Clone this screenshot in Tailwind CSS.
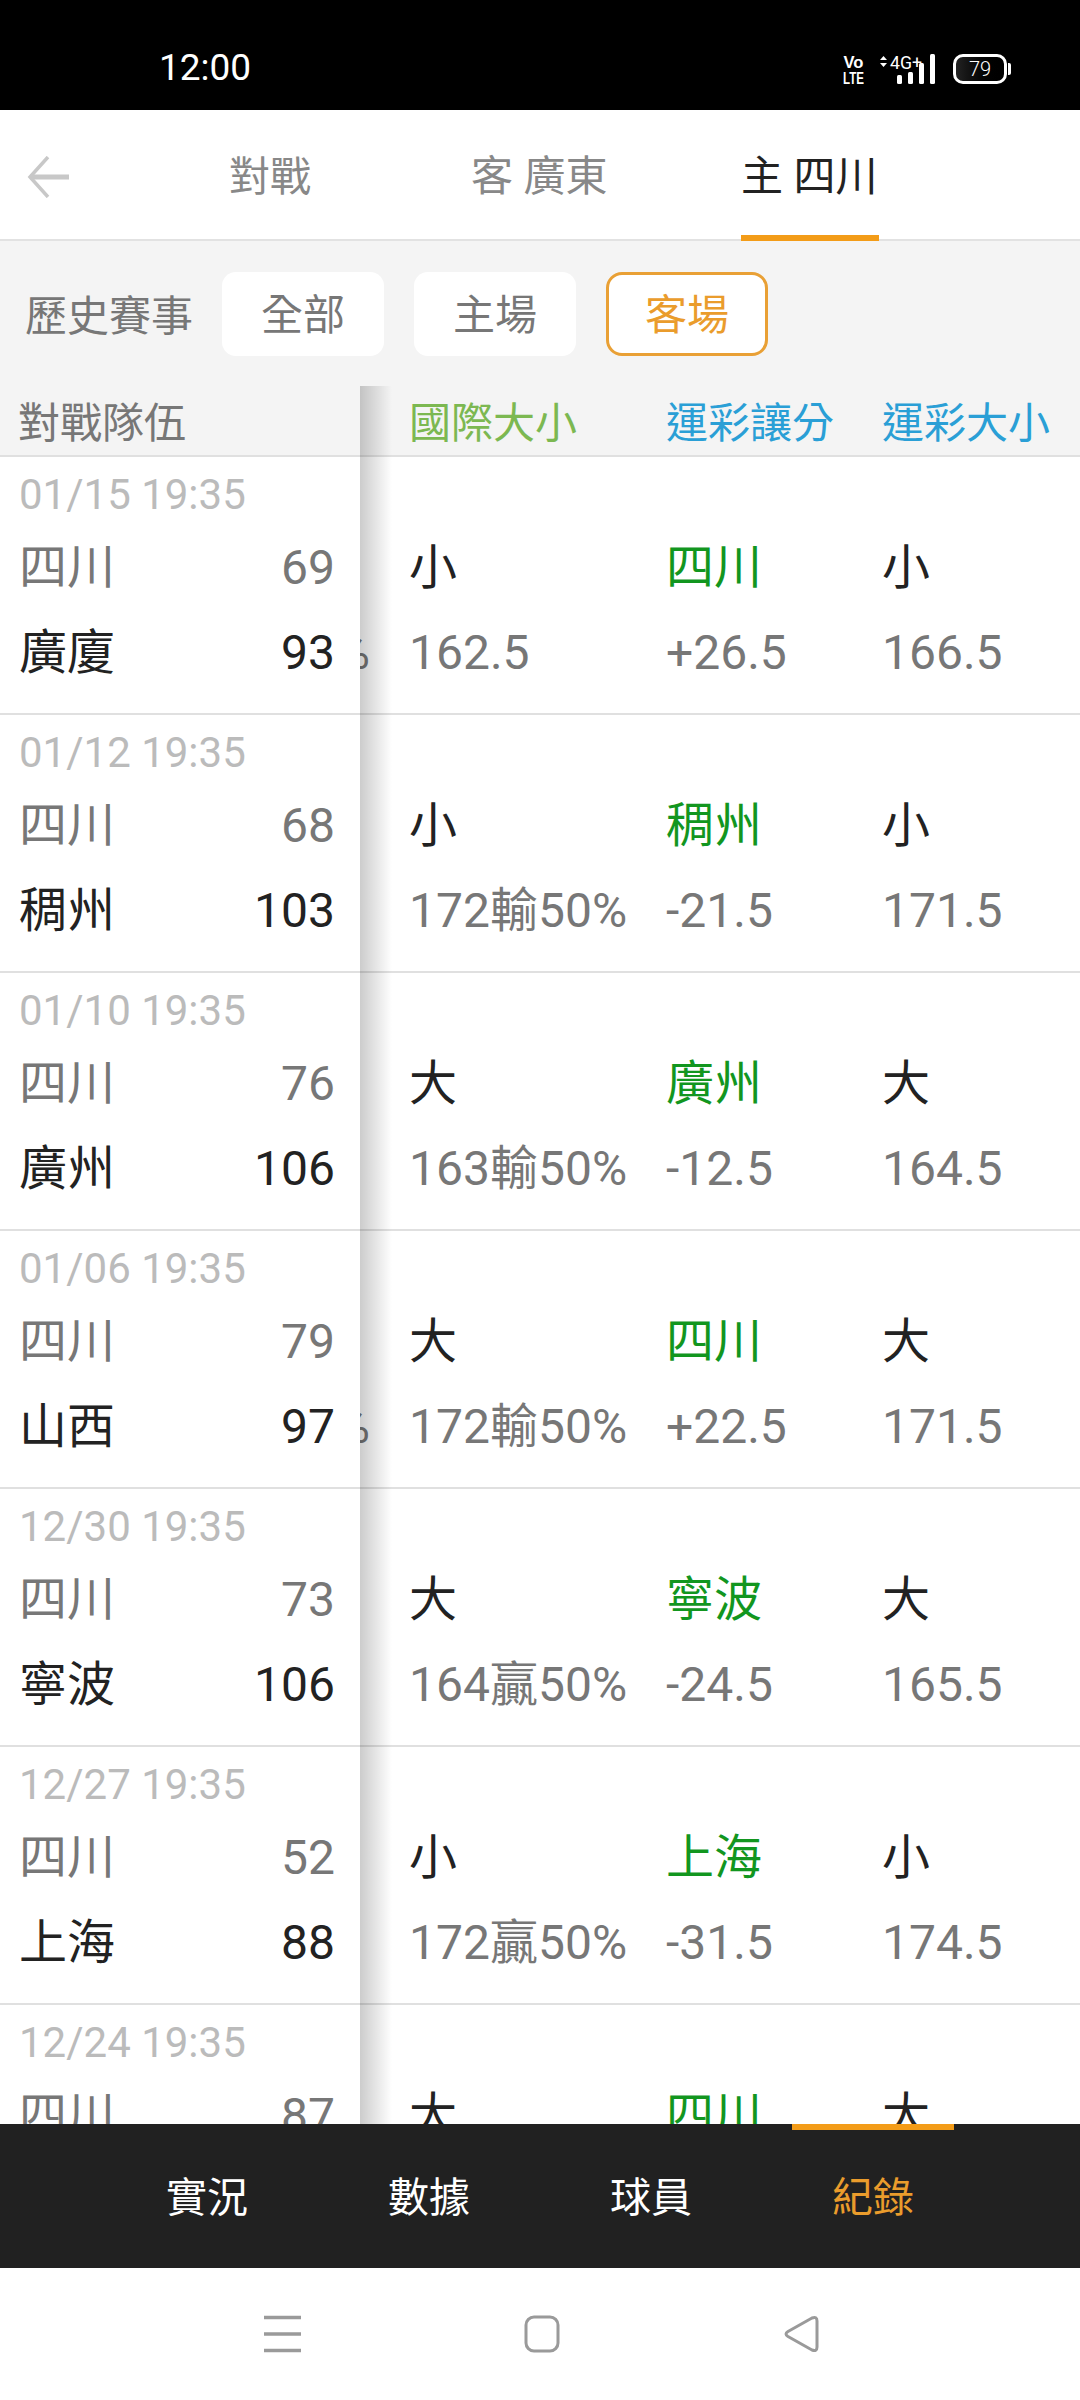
<!DOCTYPE html>
<html lang="zh-Hant">
<head>
<meta charset="utf-8">
<script src="https://cdn.jsdelivr.net/npm/@tailwindcss/browser@4"></script>
</head>
<body class="m-0 bg-white">
<div class="relative flex flex-col w-[1080px] h-[2400px] overflow-hidden bg-white text-[#777] font-['Roboto','Noto_Sans_CJK_TC',sans-serif]">

  <!-- status bar -->
  <div class="h-[110px] shrink-0 bg-black text-white flex items-center pt-[28px] pl-[159px] pr-[69px] justify-between">
    <span class="text-[37px] leading-none -mt-[3px]">12:00</span>
    <div class="flex items-center">
      <svg width="21" height="30" viewBox="0 0 21 30" class="mr-[15px]">
        <text x="10.5" y="13.5" text-anchor="middle" font-size="17" font-weight="700" fill="#fff" font-family="Liberation Sans" textLength="20" lengthAdjust="spacingAndGlyphs">Vo</text>
        <text x="10.5" y="29.5" text-anchor="middle" font-size="17" font-weight="700" fill="#fff" font-family="Liberation Sans" textLength="21" lengthAdjust="spacingAndGlyphs">LTE</text>
      </svg>
      <svg width="56" height="30" viewBox="0 0 56 30" class="mr-[18px]">
        <path d="M1 6l3.5-4 3.5 4zM1 9l3.5 4 3.5-4z" fill="#fff"/>
        <text x="11" y="15" font-size="19" fill="#fff" font-family="Roboto" textLength="32" lengthAdjust="spacingAndGlyphs">4G+</text>
        <rect x="18" y="21" width="5" height="9" rx="1.5" fill="#fff"/>
        <rect x="29" y="18" width="5" height="12" rx="1.5" fill="#fff"/>
        <rect x="40" y="9" width="5" height="21" rx="1.5" fill="#fff"/>
        <rect x="51" y="0" width="5" height="30" rx="1.5" fill="#fff"/>
      </svg>
      <div class="flex items-center">
        <div class="w-[54px] h-[30px] rounded-[10px] border-[3px] border-white bg-gradient-to-r from-[#222] to-black flex items-center justify-center text-[20px] leading-none font-light">79</div>
        <div class="w-[3px] h-[12px] bg-white ml-[1px] rounded-r-[2px]"></div>
      </div>
    </div>
  </div>

  <!-- top tabs -->
  <div class="relative h-[131px] shrink-0 bg-white border-b-2 border-[#e2e2e2]">
    <svg width="42" height="42" viewBox="0 0 42 42" class="absolute left-[27px] top-[46px]">
      <path d="M21 1 L3 21 L21 41" fill="none" stroke="#c8c8c8" stroke-width="3.5"/>
      <path d="M3 21 H42" fill="none" stroke="#c8c8c8" stroke-width="5"/>
    </svg>
    <div class="absolute left-[229px] top-[42px] text-[41px] leading-[50px] text-[#888]">對戰</div>
    <div class="absolute left-[471px] top-[42px] text-[42px] leading-[50px] text-[#888]">客 廣東</div>
    <div class="absolute left-[741px] top-[42px] text-[42px] leading-[50px] text-[#222]">主 四川</div>
    <div class="absolute left-[741px] bottom-[-2px] w-[138px] h-[6px] bg-[#f39c18]"></div>
  </div>

  <!-- filter -->
  <div class="h-[145px] shrink-0 bg-[#f4f4f4] flex items-start pt-[31px] pl-[25px]">
    <span class="text-[42px] leading-[84px] w-[197px] pt-[3px] text-[#777]">歷史賽事</span>
    <div class="flex gap-[30px]">
      <div class="w-[162px] h-[84px] pt-[3px] rounded-[14px] bg-white flex items-center justify-center text-[42px] text-[#777]">全部</div>
      <div class="w-[162px] h-[84px] pt-[3px] rounded-[14px] bg-white flex items-center justify-center text-[42px] text-[#777]">主場</div>
      <div class="w-[162px] h-[84px] pt-[3px] rounded-[16px] bg-white border-[3px] border-[#e9a035] flex items-center justify-center text-[42px] text-[#ea9c2c]">客場</div>
    </div>
  </div>

  <!-- table -->
  <div class="relative flex-1 min-h-0 overflow-hidden">
    <!-- header -->
    <div class="h-[71px] flex bg-[#f4f4f4] border-b-2 border-[#e0e0e0] text-[42px] leading-[76px]">
      <div class="w-[360px] pl-[18px] text-[#777]">對戰隊伍</div>
      <div class="w-[49px]"></div>
      <div class="w-[257px] text-[#7cb851]">國際大小</div>
      <div class="w-[216px] text-[#2a9fd6]">運彩讓分</div>
      <div class="text-[#2a9fd6]">運彩大小</div>
    </div>

    <!-- rows -->
    <div class="flex h-[258px] border-b-2 border-[#e0e0e0]">
      <div class="w-[360px] shrink-0 bg-white relative z-10 pl-[19px] pr-[25px]">
        <div class="pt-[14px] h-[68px] text-[42px] leading-[48px] text-[#bbb]">01/15 19:35</div>
        <div class="h-[85px] flex justify-between items-center text-[48px] text-[#777]"><span>四川</span><span>69</span></div>
        <div class="h-[85px] flex justify-between items-center text-[48px] text-[#222]"><span>廣廈</span><span>93</span></div>
      </div>
      <div class="w-[49px] shrink-0 overflow-hidden">
        <div class="h-[68px]"></div><div class="h-[85px]"></div>
        <div class="h-[85px] w-[10px] flex justify-end items-center text-[48px]">%</div>
      </div>
      <div class="w-[257px] shrink-0 pt-[68px] text-[48px]">
        <div class="h-[85px] flex items-center text-[#222]">小</div>
        <div class="h-[85px] flex items-center">162.5</div>
      </div>
      <div class="w-[216px] shrink-0 pt-[68px] text-[48px]">
        <div class="h-[85px] flex items-center text-[#12961f]">四川</div>
        <div class="h-[85px] flex items-center">+26.5</div>
      </div>
      <div class="pt-[68px] text-[48px]">
        <div class="h-[85px] flex items-center text-[#222]">小</div>
        <div class="h-[85px] flex items-center">166.5</div>
      </div>
    </div>

    <div class="flex h-[258px] border-b-2 border-[#e0e0e0]">
      <div class="w-[360px] shrink-0 bg-white relative z-10 pl-[19px] pr-[25px]">
        <div class="pt-[14px] h-[68px] text-[42px] leading-[48px] text-[#bbb]">01/12 19:35</div>
        <div class="h-[85px] flex justify-between items-center text-[48px] text-[#777]"><span>四川</span><span>68</span></div>
        <div class="h-[85px] flex justify-between items-center text-[48px] text-[#222]"><span>稠州</span><span>103</span></div>
      </div>
      <div class="w-[49px] shrink-0"></div>
      <div class="w-[257px] shrink-0 pt-[68px] text-[48px]">
        <div class="h-[85px] flex items-center text-[#222]">小</div>
        <div class="h-[85px] flex items-center">172輸50%</div>
      </div>
      <div class="w-[216px] shrink-0 pt-[68px] text-[48px]">
        <div class="h-[85px] flex items-center text-[#12961f]">稠州</div>
        <div class="h-[85px] flex items-center">-21.5</div>
      </div>
      <div class="pt-[68px] text-[48px]">
        <div class="h-[85px] flex items-center text-[#222]">小</div>
        <div class="h-[85px] flex items-center">171.5</div>
      </div>
    </div>

    <div class="flex h-[258px] border-b-2 border-[#e0e0e0]">
      <div class="w-[360px] shrink-0 bg-white relative z-10 pl-[19px] pr-[25px]">
        <div class="pt-[14px] h-[68px] text-[42px] leading-[48px] text-[#bbb]">01/10 19:35</div>
        <div class="h-[85px] flex justify-between items-center text-[48px] text-[#777]"><span>四川</span><span>76</span></div>
        <div class="h-[85px] flex justify-between items-center text-[48px] text-[#222]"><span>廣州</span><span>106</span></div>
      </div>
      <div class="w-[49px] shrink-0"></div>
      <div class="w-[257px] shrink-0 pt-[68px] text-[48px]">
        <div class="h-[85px] flex items-center text-[#222]">大</div>
        <div class="h-[85px] flex items-center">163輸50%</div>
      </div>
      <div class="w-[216px] shrink-0 pt-[68px] text-[48px]">
        <div class="h-[85px] flex items-center text-[#12961f]">廣州</div>
        <div class="h-[85px] flex items-center">-12.5</div>
      </div>
      <div class="pt-[68px] text-[48px]">
        <div class="h-[85px] flex items-center text-[#222]">大</div>
        <div class="h-[85px] flex items-center">164.5</div>
      </div>
    </div>

    <div class="flex h-[258px] border-b-2 border-[#e0e0e0]">
      <div class="w-[360px] shrink-0 bg-white relative z-10 pl-[19px] pr-[25px]">
        <div class="pt-[14px] h-[68px] text-[42px] leading-[48px] text-[#bbb]">01/06 19:35</div>
        <div class="h-[85px] flex justify-between items-center text-[48px] text-[#777]"><span>四川</span><span>79</span></div>
        <div class="h-[85px] flex justify-between items-center text-[48px] text-[#222]"><span>山西</span><span>97</span></div>
      </div>
      <div class="w-[49px] shrink-0 overflow-hidden">
        <div class="h-[68px]"></div><div class="h-[85px]"></div>
        <div class="h-[85px] w-[10px] flex justify-end items-center text-[48px]">%</div>
      </div>
      <div class="w-[257px] shrink-0 pt-[68px] text-[48px]">
        <div class="h-[85px] flex items-center text-[#222]">大</div>
        <div class="h-[85px] flex items-center">172輸50%</div>
      </div>
      <div class="w-[216px] shrink-0 pt-[68px] text-[48px]">
        <div class="h-[85px] flex items-center text-[#12961f]">四川</div>
        <div class="h-[85px] flex items-center">+22.5</div>
      </div>
      <div class="pt-[68px] text-[48px]">
        <div class="h-[85px] flex items-center text-[#222]">大</div>
        <div class="h-[85px] flex items-center">171.5</div>
      </div>
    </div>

    <div class="flex h-[258px] border-b-2 border-[#e0e0e0]">
      <div class="w-[360px] shrink-0 bg-white relative z-10 pl-[19px] pr-[25px]">
        <div class="pt-[14px] h-[68px] text-[42px] leading-[48px] text-[#bbb]">12/30 19:35</div>
        <div class="h-[85px] flex justify-between items-center text-[48px] text-[#777]"><span>四川</span><span>73</span></div>
        <div class="h-[85px] flex justify-between items-center text-[48px] text-[#222]"><span>寧波</span><span>106</span></div>
      </div>
      <div class="w-[49px] shrink-0"></div>
      <div class="w-[257px] shrink-0 pt-[68px] text-[48px]">
        <div class="h-[85px] flex items-center text-[#222]">大</div>
        <div class="h-[85px] flex items-center">164贏50%</div>
      </div>
      <div class="w-[216px] shrink-0 pt-[68px] text-[48px]">
        <div class="h-[85px] flex items-center text-[#12961f]">寧波</div>
        <div class="h-[85px] flex items-center">-24.5</div>
      </div>
      <div class="pt-[68px] text-[48px]">
        <div class="h-[85px] flex items-center text-[#222]">大</div>
        <div class="h-[85px] flex items-center">165.5</div>
      </div>
    </div>

    <div class="flex h-[258px] border-b-2 border-[#e0e0e0]">
      <div class="w-[360px] shrink-0 bg-white relative z-10 pl-[19px] pr-[25px]">
        <div class="pt-[14px] h-[68px] text-[42px] leading-[48px] text-[#bbb]">12/27 19:35</div>
        <div class="h-[85px] flex justify-between items-center text-[48px] text-[#777]"><span>四川</span><span>52</span></div>
        <div class="h-[85px] flex justify-between items-center text-[48px] text-[#222]"><span>上海</span><span>88</span></div>
      </div>
      <div class="w-[49px] shrink-0"></div>
      <div class="w-[257px] shrink-0 pt-[68px] text-[48px]">
        <div class="h-[85px] flex items-center text-[#222]">小</div>
        <div class="h-[85px] flex items-center">172贏50%</div>
      </div>
      <div class="w-[216px] shrink-0 pt-[68px] text-[48px]">
        <div class="h-[85px] flex items-center text-[#12961f]">上海</div>
        <div class="h-[85px] flex items-center">-31.5</div>
      </div>
      <div class="pt-[68px] text-[48px]">
        <div class="h-[85px] flex items-center text-[#222]">小</div>
        <div class="h-[85px] flex items-center">174.5</div>
      </div>
    </div>

    <div class="flex h-[258px] border-b-2 border-[#e0e0e0]">
      <div class="w-[360px] shrink-0 bg-white relative z-10 pl-[19px] pr-[25px]">
        <div class="pt-[14px] h-[68px] text-[42px] leading-[48px] text-[#bbb]">12/24 19:35</div>
        <div class="h-[85px] flex justify-between items-center text-[48px] text-[#777]"><span>四川</span><span>87</span></div>
      </div>
      <div class="w-[49px] shrink-0"></div>
      <div class="w-[257px] shrink-0 pt-[68px] text-[48px]">
        <div class="h-[85px] flex items-center text-[#222]">大</div>
      </div>
      <div class="w-[216px] shrink-0 pt-[68px] text-[48px]">
        <div class="h-[85px] flex items-center text-[#12961f]">四川</div>
      </div>
      <div class="pt-[68px] text-[48px]">
        <div class="h-[85px] flex items-center text-[#222]">大</div>
      </div>
    </div>

    <!-- frozen column shadow -->
    <div class="absolute left-[360px] top-0 bottom-0 w-[32px] z-20 bg-gradient-to-r from-black/20 to-transparent"></div>
  </div>

  <!-- bottom tabs -->
  <div class="relative h-[144px] shrink-0 bg-[#212121] flex items-center pt-[6px] pl-[96px] text-[41px] text-white">
    <div class="w-[222px] text-center">實況</div>
    <div class="w-[222px] text-center">數據</div>
    <div class="w-[222px] text-center">球員</div>
    <div class="w-[222px] text-center text-[#ea9c2c]">紀錄</div>
    <div class="absolute left-[792px] top-0 w-[162px] h-[6px] bg-[#f39c18]"></div>
  </div>

  <!-- system nav -->
  <div class="h-[132px] shrink-0 bg-white flex items-center justify-center gap-[223px] pl-[3px]">
    <svg width="37" height="38" viewBox="0 0 37 38"><path d="M0 2.5H37M0 19H37M0 35.5H37" stroke="#9a9a9a" stroke-width="3.5"/></svg>
    <svg width="36" height="38" viewBox="0 0 36 38"><rect x="2" y="2" width="32" height="34" rx="8" fill="none" stroke="#9a9a9a" stroke-width="3"/></svg>
    <svg width="36" height="38" viewBox="0 0 36 38"><path d="M29 3 Q34 1 34 6 V32 Q34 37 29 35 L5 21.5 Q1 19 5 16.5 Z" fill="none" stroke="#9a9a9a" stroke-width="3" stroke-linejoin="round"/></svg>
  </div>
</div>
</body>
</html>
